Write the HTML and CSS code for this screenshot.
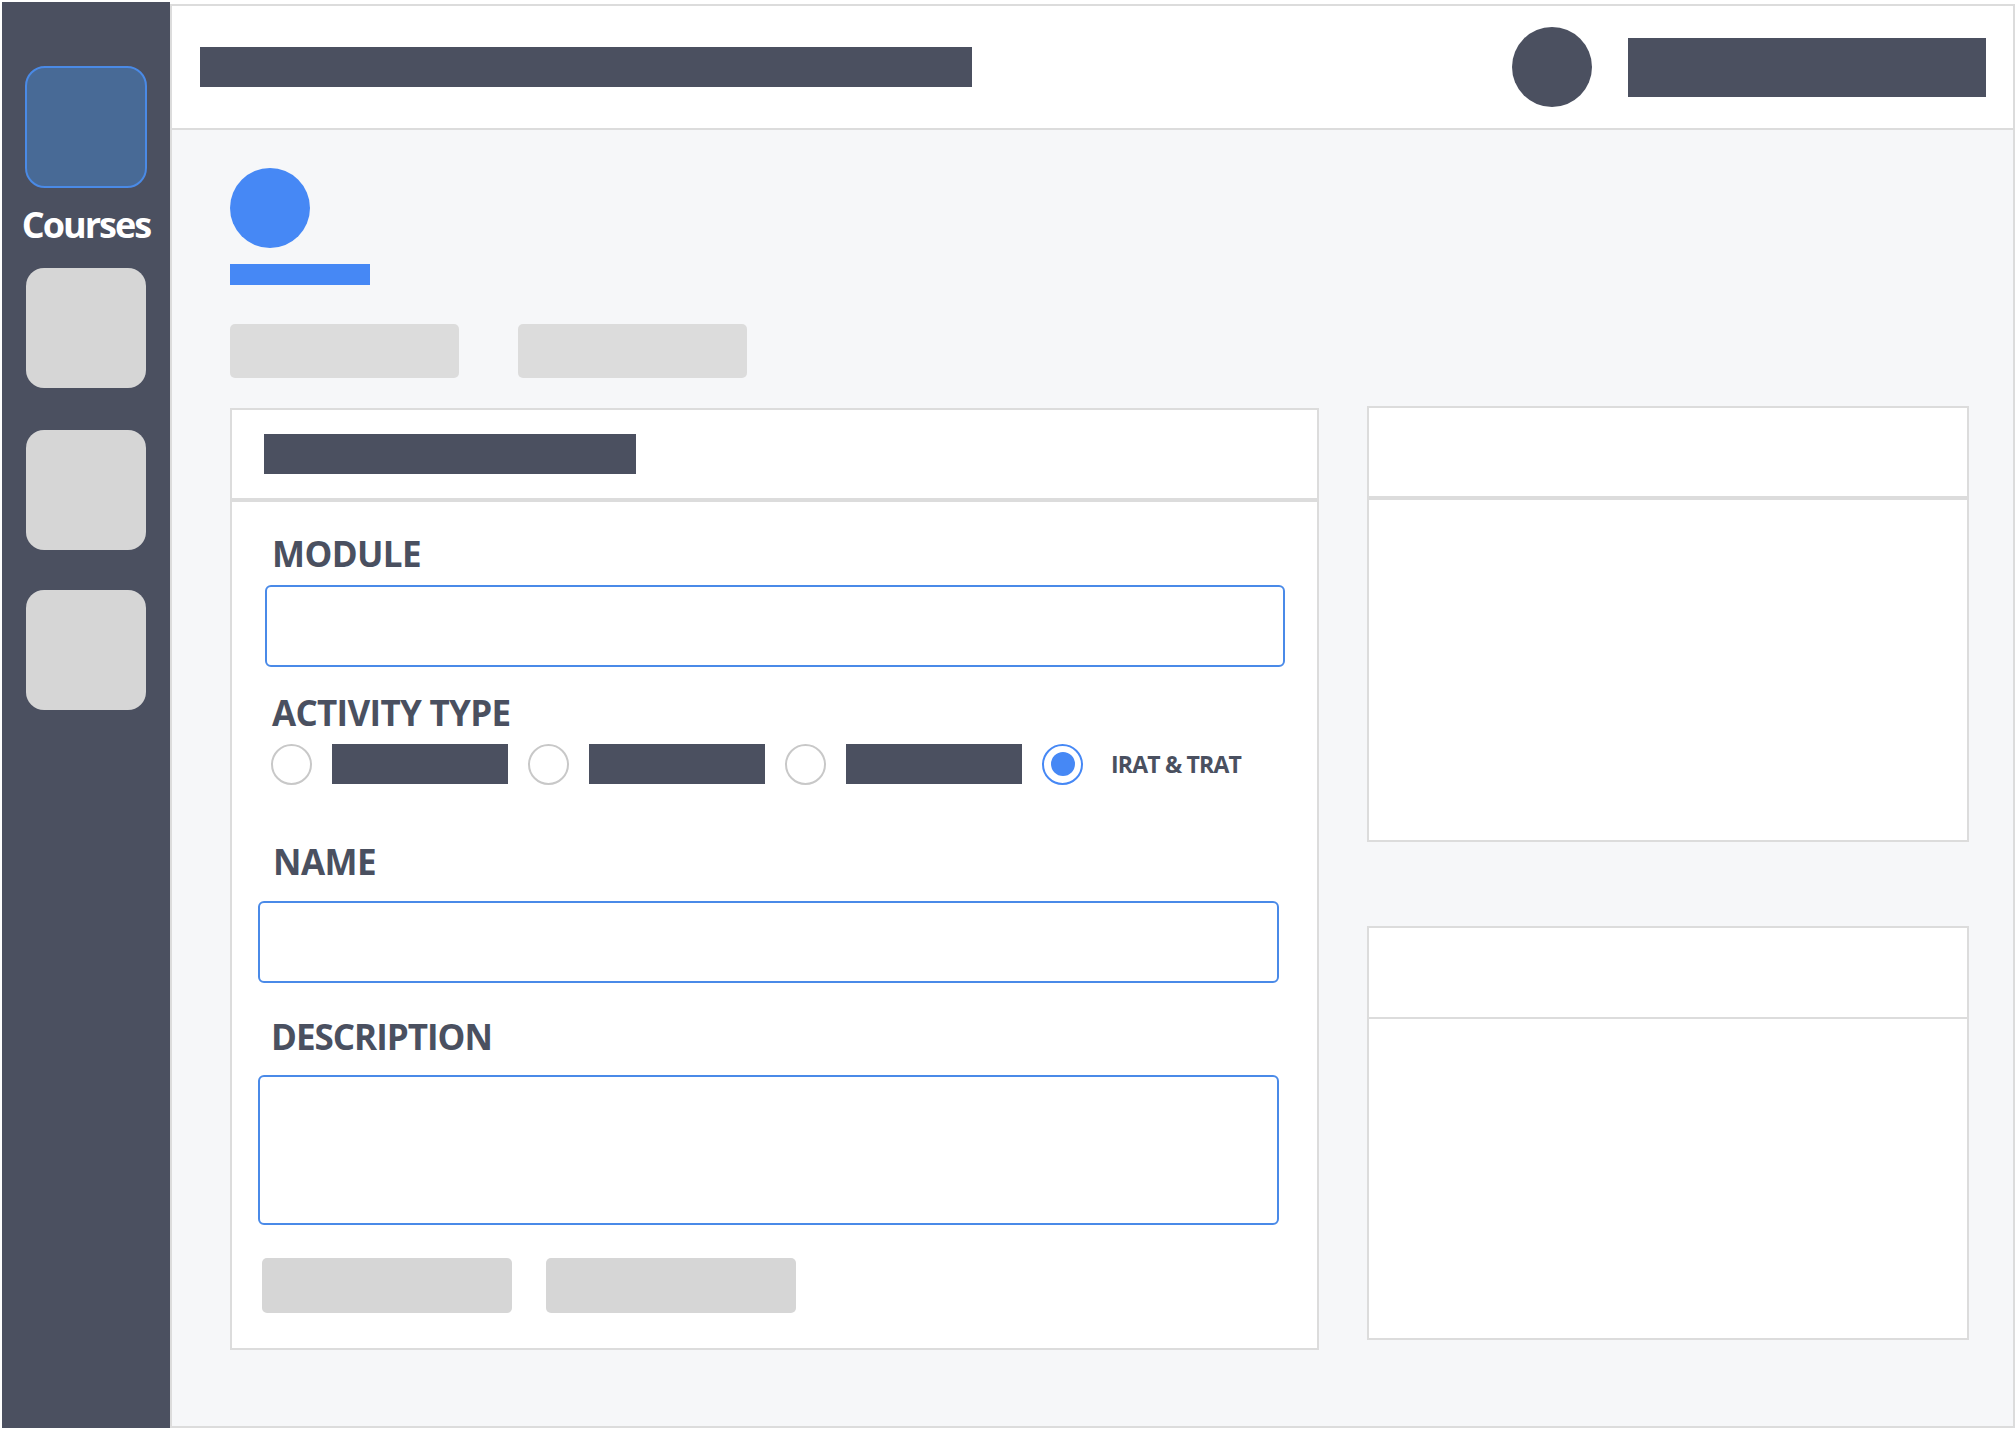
FILE: index.html
```html
<!DOCTYPE html>
<html lang="en">
<head>
<meta charset="utf-8">
<title>Create activity</title>
<link rel="stylesheet" href="styles.css">
</head>
<body>
<div class="app">
  <aside class="sidebar">
    <div class="nav-icon nav-icon--active"></div>
    <div class="nav-label">Courses</div>
    <div class="nav-icon nav-icon--first"></div>
    <div class="nav-icon nav-icon--second"></div>
    <div class="nav-icon nav-icon--third"></div>
  </aside>
  <div class="main">
    <header class="topbar">
      <div class="topbar-title"></div>
      <div class="topbar-user">
        <div class="avatar"></div>
        <div class="user-name"></div>
      </div>
    </header>
    <div class="content">
      <div class="course-badge"></div>
      <div class="course-underline"></div>
      <div class="tab-row">
        <div class="tab"></div>
        <div class="tab"></div>
      </div>
      <div class="cards">
        <section class="card card--form">
          <div class="card-head card-head--thick"><div class="card-title"></div></div>
          <div class="form-body">
            <div class="field-label label-module">MODULE</div>
            <div class="input input-module"></div>
            <div class="field-label label-activity">ACTIVITY TYPE</div>
            <div class="radio-row">
              <span class="radio"></span><span class="radio-text-bar"></span>
              <span class="radio"></span><span class="radio-text-bar"></span>
              <span class="radio"></span><span class="radio-text-bar"></span>
              <span class="radio radio--checked"><span class="radio-dot"></span></span>
              <span class="radio-text">IRAT &amp; TRAT</span>
            </div>
            <div class="field-label label-name">NAME</div>
            <div class="input input-name"></div>
            <div class="field-label label-desc">DESCRIPTION</div>
            <div class="input input-desc"></div>
            <div class="actions">
              <div class="btn"></div>
              <div class="btn"></div>
            </div>
          </div>
        </section>
        <div class="side-col">
          <section class="card card--side1">
            <div class="card-head card-head--thick"></div>
          </section>
          <section class="card card--side2">
            <div class="card-head"></div>
          </section>
        </div>
      </div>
    </div>
  </div>
</div>
</body>
</html>
```

FILE: styles.css
```css
html, body {
  margin: 0;
  padding: 0;
  background: #ffffff;
}

body {
  font-family: "Open Sans", "Noto Sans", "Liberation Sans", sans-serif;
  color: #4a5060;
}

.app {
  display: flex;
  width: 2016px;
  height: 1430px;
  box-sizing: border-box;
  padding: 2px 0 2px 2px;
}

/* ---------- sidebar ---------- */
.sidebar {
  width: 168px;
  flex: none;
  background: #4b5060;
  display: flex;
  flex-direction: column;
  align-items: center;
  padding-top: 64px;
  box-sizing: border-box;
}

.nav-icon {
  width: 120px;
  height: 120px;
  border-radius: 18px;
  background: #d6d6d6;
  box-sizing: border-box;
}

.nav-icon--active {
  width: 122px;
  height: 122px;
  background: #486a96;
  border: 2px solid #4a8ae6;
  border-radius: 20px;
}

.nav-label {
  color: #ffffff;
  font-weight: 700;
  font-size: 36px;
  line-height: 37px;
  letter-spacing: -2px;
  margin-top: 18px;
  margin-bottom: 25px;
}

.nav-icon--second {
  margin-top: 42px;
}

.nav-icon--third {
  margin-top: 40px;
}

/* ---------- main ---------- */
.main {
  flex: 1;
  margin: 2px 2px 0 0;
  border: 2px solid #dcdcdc;
  background: #f6f7f9;
  display: flex;
  flex-direction: column;
}

.topbar {
  height: 122px;
  flex: none;
  background: #ffffff;
  border-bottom: 2px solid #dcdcdc;
  display: flex;
  align-items: center;
  justify-content: space-between;
  padding: 0 27px 0 28px;
}

.topbar-title {
  width: 772px;
  height: 40px;
  background: #4b5060;
}

.topbar-user {
  display: flex;
  align-items: center;
  gap: 36px;
}

.avatar {
  width: 80px;
  height: 80px;
  border-radius: 50%;
  background: #4b5060;
}

.user-name {
  width: 358px;
  height: 59px;
  background: #4b5060;
}

.content {
  padding: 38px 44px 0 58px;
}

.course-badge {
  width: 80px;
  height: 80px;
  border-radius: 50%;
  background: #4688f5;
}

.course-underline {
  width: 140px;
  height: 21px;
  margin-top: 16px;
  background: #4688f5;
}

.tab-row {
  display: flex;
  gap: 59px;
  margin-top: 39px;
}

.tab {
  width: 229px;
  height: 54px;
  border-radius: 5px;
  background: #dcdcdc;
}

/* ---------- cards ---------- */
.cards {
  display: flex;
  align-items: flex-start;
  gap: 48px;
  margin-top: 28px;
}

.card {
  background: #ffffff;
  border: 2px solid #dcdcdc;
  box-sizing: border-box;
}

.card--form {
  width: 1089px;
  margin-top: 2px;
}

.card-head {
  height: 88px;
  box-sizing: border-box;
  padding: 24px 32px;
  border-bottom: 2px solid #dcdcdc;
}

.card-head--thick {
  height: 92px;
  border-bottom-width: 4px;
}

.card-title {
  width: 372px;
  height: 40px;
  background: #4b5060;
}

.side-col {
  width: 602px;
  display: flex;
  flex-direction: column;
  gap: 84px;
}

.card--side1 {
  height: 436px;
}

.card--side2 {
  height: 414px;
}

.card--side2 .card-head {
  height: 91px;
}

/* ---------- form ---------- */
.form-body {
  padding: 34px 32px 35px 33px;
  display: flex;
  flex-direction: column;
  align-items: flex-start;
}

.field-label {
  font-weight: 700;
  font-size: 35px;
  line-height: 35px;
  padding-left: 7px;
  color: #4a5060;
}

.label-module {
  letter-spacing: -0.6px;
}

.label-activity {
  margin-top: 28px;
  letter-spacing: -0.7px;
}

.label-name {
  margin-top: 59px;
  padding-left: 8px;
  letter-spacing: -0.5px;
}

.label-desc {
  margin-top: 36px;
  padding-left: 6px;
  letter-spacing: -1px;
}

.input {
  box-sizing: border-box;
  border: 2px solid #4a8ae8;
  border-radius: 6px;
  background: #ffffff;
}

.input-module {
  width: 1020px;
  height: 82px;
  margin-top: 14px;
}

.input-name {
  width: 1021px;
  height: 82px;
  margin-top: 22px;
  margin-left: -7px;
}

.input-desc {
  width: 1021px;
  height: 150px;
  margin-top: 21px;
  margin-left: -7px;
}

.radio-row {
  display: flex;
  align-items: center;
  gap: 20px;
  margin-top: 13px;
  padding-left: 6px;
  height: 42px;
}

.radio {
  width: 41px;
  height: 41px;
  box-sizing: border-box;
  border: 2px solid #c8c8c8;
  border-radius: 50%;
  display: flex;
  align-items: center;
  justify-content: center;
  flex: none;
}

.radio--checked {
  border-color: #4688f5;
}

.radio-dot {
  width: 24px;
  height: 24px;
  border-radius: 50%;
  background: #4688f5;
}

.radio-text-bar {
  width: 176px;
  height: 40px;
  background: #4b5060;
  flex: none;
}

.radio-text {
  margin-left: 8px;
  font-weight: 700;
  font-size: 23px;
  line-height: 23px;
  letter-spacing: -0.8px;
  color: #4a5060;
}

.actions {
  display: flex;
  gap: 34px;
  margin-top: 33px;
  margin-left: -3px;
}

.btn {
  width: 250px;
  height: 55px;
  border-radius: 5px;
  background: #d6d6d6;
}
```
